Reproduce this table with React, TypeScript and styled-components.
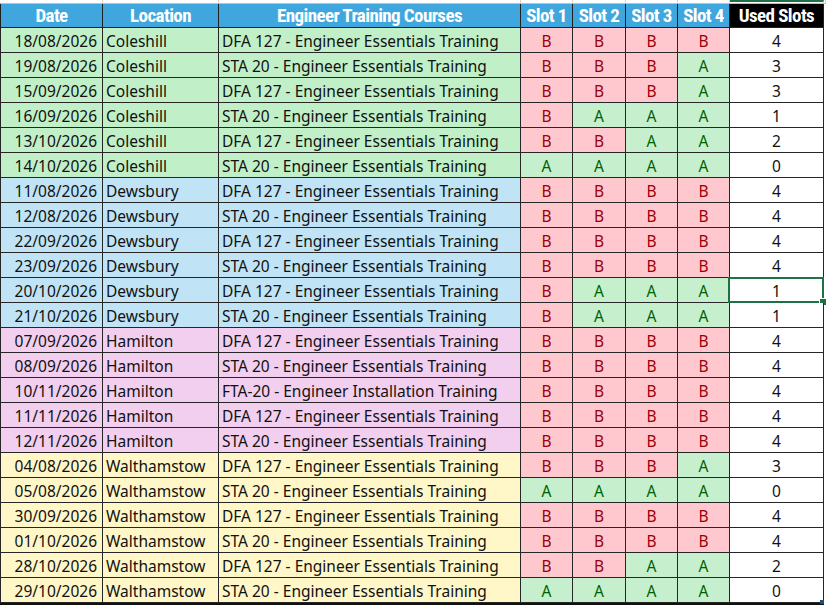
import styled, { createGlobalStyle, css } from "styled-components";

const GlobalStyle = createGlobalStyle`
  html, body {
    margin: 0;
    padding: 0;
    background: #ffffff;
  }
  body {
    font-family: "Noto Sans", "Open Sans", sans-serif;
  }
`;

type Site = "Coleshill" | "Dewsbury" | "Hamilton" | "Walthamstow";
type Slot = "A" | "B";

interface Course {
  date: string;
  site: Site;
  title: string;
  slots: Slot[];
}

const DFA = "DFA 127 - Engineer Essentials Training";
const STA = "STA 20 - Engineer Essentials Training";
const FTA = "FTA-20 - Engineer Installation Training";

const courses: Course[] = [
  { date: "18/08/2026", site: "Coleshill", title: DFA, slots: ["B", "B", "B", "B"] },
  { date: "19/08/2026", site: "Coleshill", title: STA, slots: ["B", "B", "B", "A"] },
  { date: "15/09/2026", site: "Coleshill", title: DFA, slots: ["B", "B", "B", "A"] },
  { date: "16/09/2026", site: "Coleshill", title: STA, slots: ["B", "A", "A", "A"] },
  { date: "13/10/2026", site: "Coleshill", title: DFA, slots: ["B", "B", "A", "A"] },
  { date: "14/10/2026", site: "Coleshill", title: STA, slots: ["A", "A", "A", "A"] },
  { date: "11/08/2026", site: "Dewsbury", title: DFA, slots: ["B", "B", "B", "B"] },
  { date: "12/08/2026", site: "Dewsbury", title: STA, slots: ["B", "B", "B", "B"] },
  { date: "22/09/2026", site: "Dewsbury", title: DFA, slots: ["B", "B", "B", "B"] },
  { date: "23/09/2026", site: "Dewsbury", title: STA, slots: ["B", "B", "B", "B"] },
  { date: "20/10/2026", site: "Dewsbury", title: DFA, slots: ["B", "A", "A", "A"] },
  { date: "21/10/2026", site: "Dewsbury", title: STA, slots: ["B", "A", "A", "A"] },
  { date: "07/09/2026", site: "Hamilton", title: DFA, slots: ["B", "B", "B", "B"] },
  { date: "08/09/2026", site: "Hamilton", title: STA, slots: ["B", "B", "B", "B"] },
  { date: "10/11/2026", site: "Hamilton", title: FTA, slots: ["B", "B", "B", "B"] },
  { date: "11/11/2026", site: "Hamilton", title: DFA, slots: ["B", "B", "B", "B"] },
  { date: "12/11/2026", site: "Hamilton", title: STA, slots: ["B", "B", "B", "B"] },
  { date: "04/08/2026", site: "Walthamstow", title: DFA, slots: ["B", "B", "B", "A"] },
  { date: "05/08/2026", site: "Walthamstow", title: STA, slots: ["A", "A", "A", "A"] },
  { date: "30/09/2026", site: "Walthamstow", title: DFA, slots: ["B", "B", "B", "B"] },
  { date: "01/10/2026", site: "Walthamstow", title: STA, slots: ["B", "B", "B", "B"] },
  { date: "28/10/2026", site: "Walthamstow", title: DFA, slots: ["B", "B", "A", "A"] },
  { date: "29/10/2026", site: "Walthamstow", title: STA, slots: ["A", "A", "A", "A"] },
];

const siteFill: Record<Site, string> = {
  Coleshill: "#c1f0c8",
  Dewsbury: "#c0e4f5",
  Hamilton: "#f2ceef",
  Walthamstow: "#fff7c8",
};

const COLUMNS = "103px 116px 302px 52px 53px 52px 52px 94px";

const Sheet = styled.div`
  width: 826px;
  height: 607px;
  overflow: hidden;
  background: #ffffff;
`;

const GridStrip = styled.div`
  display: grid;
  grid-template-columns: ${COLUMNS} 2px;
  height: 3px;
  border-bottom: 1px solid #bfbfbf;
`;

const StripCell = styled.div<{ $active?: boolean }>`
  border-right: 1px solid #d4d4d4;
  ${(p) =>
    p.$active &&
    css`
      border-top: 2px solid #1e7145;
    `}
`;

const Table = styled.div`
  display: grid;
  grid-template-columns: ${COLUMNS};
  width: 824px;
  border-bottom: 2px solid #111111;
`;

const HeadCell = styled.div<{ $dark?: boolean }>`
  height: 23px;
  display: flex;
  align-items: center;
  justify-content: center;
  background: ${(p) => (p.$dark ? "#000000" : "#3fa7de")};
  color: #ffffff;
  font-family: "Liberation Sans Narrow", "Roboto Condensed", "Roboto", sans-serif;
  font-weight: 700;
  font-size: 19px;
  letter-spacing: -0.6px;
  white-space: nowrap;
  overflow: hidden;
  border-right: 1px solid #1f1f1f;
  border-bottom: 1px solid #1f1f1f;
  &:first-child {
    border-left: 1px solid #1f1f1f;
  }
`;

const Cell = styled.div<{
  $fill: string;
  $align?: "left" | "right" | "center";
  $first?: boolean;
}>`
  position: relative;
  height: 25px;
  display: flex;
  align-items: center;
  justify-content: ${(p) =>
    p.$align === "right" ? "flex-end" : p.$align === "center" ? "center" : "flex-start"};
  padding: 1px ${(p) => (p.$align === "right" ? "5px" : "3px")} 0;
  box-sizing: border-box;
  background: ${(p) => p.$fill};
  color: #111111;
  font-size: 15.5px;
  white-space: nowrap;
  border-right: 1px solid #262626;
  border-bottom: 1px solid #262626;
  ${(p) =>
    p.$first &&
    css`
      border-left: 1px solid #262626;
    `}
`;

const SlotCell = styled(Cell)<{ $slot: Slot }>`
  background: ${(p) => (p.$slot === "B" ? "#ffc7ce" : "#c6efce")};
  color: ${(p) => (p.$slot === "B" ? "#9c0006" : "#006100")};
`;

const Selection = styled.div`
  position: absolute;
  inset: -1px -1px -1px -2px;
  border: 2px solid #1e7145;
  pointer-events: none;
  &::after {
    content: "";
    position: absolute;
    right: -5px;
    bottom: -5px;
    width: 6px;
    height: 6px;
    background: #1e7145;
    border: 1px solid #ffffff;
  }
`;

const ResizeHandle = styled.span`
  position: absolute;
  right: -1px;
  bottom: -2px;
  width: 4px;
  height: 4px;
  background: #1f4e79;
`;

const headers = [
  "Date",
  "Location",
  "Engineer Training Courses",
  "Slot 1",
  "Slot 2",
  "Slot 3",
  "Slot 4",
];

const SELECTED_ROW = 10;

export default function App() {
  return (
    <Sheet>
      <GlobalStyle />
      <GridStrip>
        {Array.from({ length: 9 }).map((_, i) => (
          <StripCell key={i} $active={i === 7} />
        ))}
      </GridStrip>
      <Table>
        {headers.map((h) => (
          <HeadCell key={h}>{h}</HeadCell>
        ))}
        <HeadCell $dark>Used Slots</HeadCell>

        {courses.map((c, row) => {
          const fill = siteFill[c.site];
          const used = c.slots.filter((s) => s === "B").length;
          const last = row === courses.length - 1;
          return [
            <Cell key={`d${row}`} $fill={fill} $align="right" $first>
              {c.date}
            </Cell>,
            <Cell key={`l${row}`} $fill={fill}>
              {c.site}
            </Cell>,
            <Cell key={`t${row}`} $fill={fill}>
              {c.title}
            </Cell>,
            ...c.slots.map((s, i) => (
              <SlotCell key={`s${row}-${i}`} $fill="" $slot={s} $align="center">
                {s}
              </SlotCell>
            )),
            <Cell key={`u${row}`} $fill="#ffffff" $align="center">
              {used}
              {row === SELECTED_ROW && <Selection />}
              {last && <ResizeHandle />}
            </Cell>,
          ];
        })}
      </Table>
    </Sheet>
  );
}
